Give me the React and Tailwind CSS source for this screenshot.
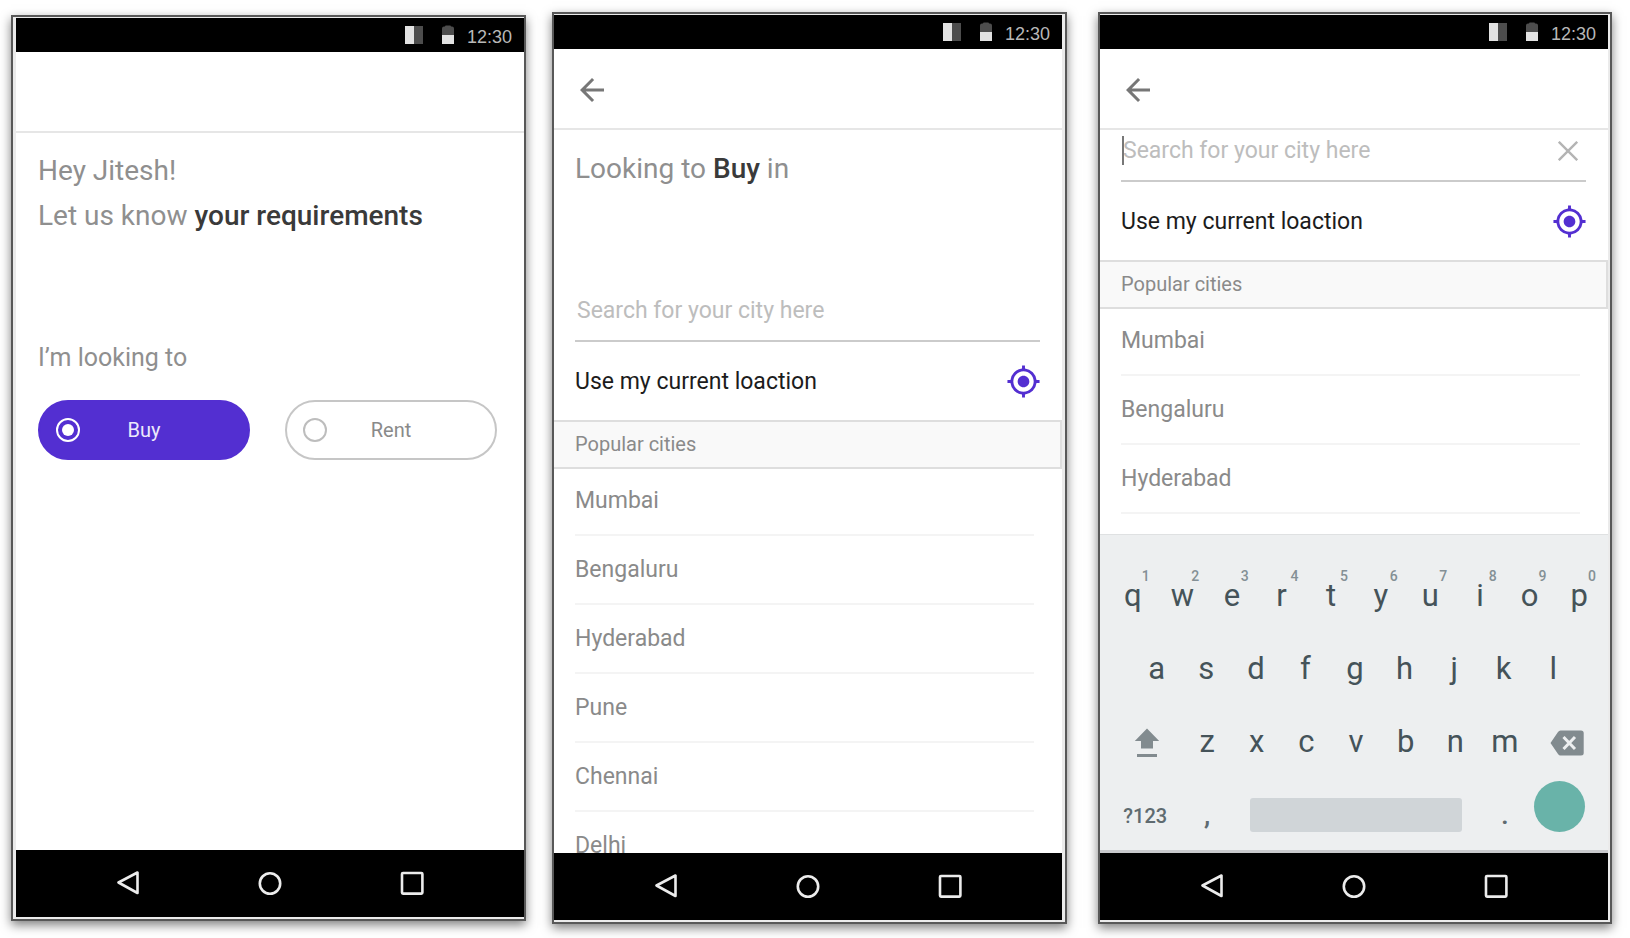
import React from "react";
import { MdArrowBack, MdMyLocation } from "react-icons/md";

function StatusBar() {
  return (
    <div className="flex h-[34px] items-center justify-end bg-black pr-3">
      <svg width="18" height="18" viewBox="0 0 18 18" aria-hidden="true">
        <rect width="9" height="18" fill="#e2e2e2" />
        <rect x="9" width="9" height="18" fill="#4d4d4d" />
      </svg>
      <svg className="ml-[19px]" width="12" height="20" viewBox="0 0 12 20" aria-hidden="true">
        <path d="M0 11V3.5Q0 1.5 2 1.5H3Q3 .5 4 .5H8Q9 .5 9 1.5H10Q12 1.5 12 3.5V11Z" fill="#4d4d4d" />
        <rect y="10" width="12" height="9" fill="#e2e2e2" />
      </svg>
      <span className="ml-[13px] pt-1 font-['Liberation_Sans',sans-serif] text-[18px] leading-[18px] text-[#b8b8b8]">12:30</span>
    </div>
  );
}

function NavBar() {
  return (
    <nav className="flex h-[67px] items-center justify-center gap-[118px] bg-black pb-[2px] text-[#ececec]">
      <button type="button" aria-label="Back">
        <svg width="24" height="24" viewBox="0 0 24 24" fill="none" stroke="currentColor" strokeWidth="2.6" strokeLinejoin="round">
          <path d="M2.5 11.5 21.5 1.5V22Z" />
        </svg>
      </button>
      <button type="button" aria-label="Home">
        <svg width="24" height="24" viewBox="0 0 24 24" fill="none" stroke="currentColor" strokeWidth="2.6">
          <circle cx="12" cy="12.5" r="10.2" />
        </svg>
      </button>
      <button type="button" aria-label="Overview">
        <svg width="24" height="24" viewBox="0 0 24 24" fill="none" stroke="currentColor" strokeWidth="2.6">
          <rect x="2" y="2" width="20.4" height="20.6" rx="1" />
        </svg>
      </button>
    </nav>
  );
}

function Phone({ className, back, children }) {
  return (
    <section
      className={`flex min-w-0 flex-1 flex-col border-2 border-[#585858] bg-[#ebebeb] pt-px pb-[2px] shadow-[0_4px_10px_rgba(0,0,0,0.5)] ${className}`}
    >
      <StatusBar />
      <header className="flex h-[81px] items-center border-b-2 border-[#e6e6e6] bg-white pl-5">
        {back && (
          <button type="button" aria-label="Go back" className="pt-0.5 text-[#777777]">
            <MdArrowBack size={36} />
          </button>
        )}
      </header>
      {children}
      <NavBar />
    </section>
  );
}

function Choice({ label, defaultChecked }) {
  return (
    <label className="relative flex h-[60px] flex-1 items-center justify-center rounded-full border-2 border-[#c6c6c6] text-[20px] text-[#8a8a8a] has-checked:border-[#532fd1] has-checked:bg-[#532fd1] has-checked:text-[#ece8fb]">
      <input
        type="radio"
        name="intent"
        defaultChecked={defaultChecked}
        className="peer absolute left-4 size-6 appearance-none rounded-full border-2 border-[#bdbdbd] checked:border-white"
      />
      <span className="absolute left-[22px] hidden size-3 rounded-full bg-white peer-checked:block" />
      {label}
    </label>
  );
}

function SearchField({ id, focused }) {
  return (
    <div className="relative mr-[22px] ml-[21px] flex items-center border-b-2 border-[#cbcbcb] pb-[13px]">
      {focused && <span className="absolute top-px left-px h-[29px] w-[2px] bg-[#777777]" />}
      <input
        id={id}
        type="text"
        aria-label="City"
        placeholder="Search for your city here"
        className="h-8 min-w-0 flex-1 bg-transparent pl-[2px] text-[23px] leading-8 outline-none placeholder:text-[#bdbdbd]"
      />
      {focused && (
        <button type="button" aria-label="Clear" className="mr-2 text-[#b4b4b4]">
          <svg width="20" height="20" viewBox="0 0 20 20" fill="none" stroke="currentColor" strokeWidth="2.4">
            <path d="M.8.8 19.2 19.2M19.2.8.8 19.2" />
          </svg>
        </button>
      )}
    </div>
  );
}

function CityPicker({ cities }) {
  return (
    <>
      <button type="button" className="flex h-[78px] w-full items-center justify-between pr-[21px] pl-[21px] text-[23px] text-[#1c1c1c]">
        <span className="pt-[3px]">Use my current loaction</span>
        <MdMyLocation size={35} className="text-[#532fd1]" />
      </button>
      <h2 className="flex h-[49px] items-center border-y-2 border-r-2 border-[#dedede] bg-[#f9f9f9] pb-px pl-[21px] text-[20px] text-[#8a8a8a]">
        Popular cities
      </h2>
      <ul className="mr-7 ml-[21px] text-[23px] leading-8 text-[#8a8a8a]">
        {cities.map((city) => (
          <li key={city} className="h-[69px] border-b-2 border-[#f4f4f4] pt-[18px] first:h-[67px] first:pt-4">
            {city}
          </li>
        ))}
      </ul>
    </>
  );
}

function Key({ children, hint }) {
  return (
    <button type="button" className="relative flex items-center justify-center">
      {children}
      {hint && (
        <span className="absolute top-[10px] right-2 text-[14px] leading-[14px] font-medium text-[#849095]">{hint}</span>
      )}
    </button>
  );
}

function Keyboard() {
  return (
    <div className="border-t border-b-[3px] border-t-[#dfe1e2] border-b-[#c9cacd] bg-[#edeff0] pt-6 text-[31px] leading-9 text-[#455359]">
      <div className="grid h-[73px] grid-cols-10 pr-1 pl-2">
        {[..."qwertyuiop"].map((k, i) => (
          <Key key={k} hint={String((i + 1) % 10)}>
            {k}
          </Key>
        ))}
      </div>
      <div className="grid h-[73px] grid-cols-9 pr-[30px] pl-8">
        {[..."asdfghjkl"].map((k) => (
          <Key key={k}>{k}</Key>
        ))}
      </div>
      <div className="grid h-[73px] grid-cols-[3fr_repeat(7,2fr)_3fr] pr-1 pl-2">
        <button type="button" aria-label="Shift" className="flex items-center justify-center pt-0.5 pl-1 text-[#828b8f]">
          <svg width="26" height="30" viewBox="0 0 26 30" fill="currentColor">
            <path d="M13 .5 25.2 13H19V20.5H7V13H.8Z" />
            <rect x="3" y="26" width="20" height="3" />
          </svg>
        </button>
        {[..."zxcvbnm"].map((k) => (
          <Key key={k}>{k}</Key>
        ))}
        <button type="button" aria-label="Backspace" className="flex items-center justify-center pt-0.5 text-[#828b8f]">
          <svg width="34" height="26" viewBox="0 0 34 26">
            <path d="M10.5.5H31Q33.7.5 33.7 3V23Q33.7 25.5 31 25.5H10.5Q9 25.5 8 24L.5 13 8 2Q9 .5 10.5.5Z" fill="currentColor" />
            <path d="m13.5 7 11.5 12M25 7 13.5 19" stroke="#edeff0" strokeWidth="3" />
          </svg>
        </button>
      </div>
      <div className="grid h-[72px] grid-cols-[3fr_2fr_10fr_2fr_3fr] items-center pt-[2px] pr-1 pl-2 text-[28px] font-medium text-[#5f6b70]">
        <button type="button" className="pt-0.5 text-[20px] leading-6">
          ?123
        </button>
        <Key>,</Key>
        <button type="button" aria-label="Space" className="mx-[18px] h-[34px] rounded-[3px] bg-[#d0d5d8]" />
        <Key>.</Key>
        <button type="button" aria-label="Enter" className="mb-[18px] ml-1 size-[51px] rounded-full bg-[#69b3a9]" />
      </div>
    </div>
  );
}

export default function App() {
  return (
    <main className="flex min-h-screen items-start bg-white pt-3 pr-[18px] pb-[14px] pl-[11px] font-[Roboto,sans-serif]">
      <Phone className="mt-[3px] pl-[3px]">
        <div className="min-h-[717px] bg-white pt-[15px] pr-[27px] pl-[22px]">
          <h1 className="text-[28px] leading-[45px] text-[#8f8f8f]">
            Hey Jitesh!
            <br />
            Let us know <span className="font-medium text-[#3a3a3a]">your requirements</span>
          </h1>
          <fieldset className="mt-[104px]">
            <legend className="text-[25px] leading-8 text-[#8f8f8f]">I’m looking to</legend>
            <div className="mt-[26px] flex gap-[35px]">
              <Choice label="Buy" defaultChecked />
              <Choice label="Rent" />
            </div>
          </fieldset>
        </div>
      </Phone>

      <Phone className="ml-[26px] pr-[3px]" back>
        <div className="h-[723px] overflow-hidden bg-white pt-4">
          <h1 className="mb-[104px] pl-[21px] text-[28px] leading-[45px] text-[#8f8f8f]">
            Looking to <span className="font-medium text-[#3a3a3a]">Buy</span> in
          </h1>
          <SearchField id="city" />
          <CityPicker cities={["Mumbai", "Bengaluru", "Hyderabad", "Pune", "Chennai", "Delhi"]} />
        </div>
      </Phone>

      <Phone className="ml-[31px] pr-[2px]" back>
        <div className="flex h-[723px] flex-col bg-white">
          <div className="min-h-0 flex-1 overflow-hidden pt-[5px]">
            <SearchField id="city-focused" focused />
            <CityPicker cities={["Mumbai", "Bengaluru", "Hyderabad"]} />
          </div>
          <Keyboard />
        </div>
      </Phone>
    </main>
  );
}
